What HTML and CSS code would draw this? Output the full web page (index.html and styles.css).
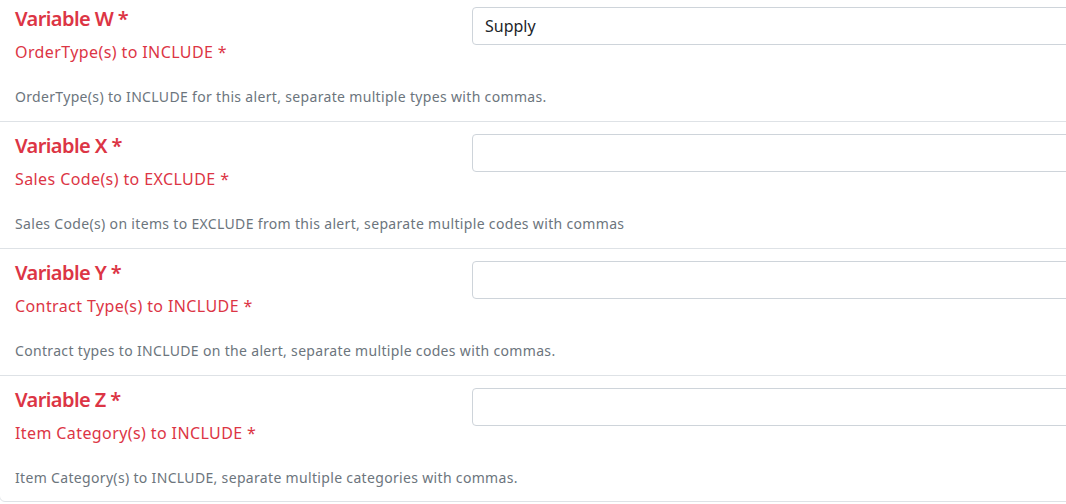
FILE: index.html
```html
<!DOCTYPE html>
<html lang="en">

<head>
    <meta charset="UTF-8">
    <meta name="viewport" content="width=device-width, initial-scale=1.0">
    <title>Alert Variables</title>
    <link rel="stylesheet" href="styles.css">
</head>

<body>
    <form class="variables">
        <div class="field">
            <div class="fieldRow">
                <label class="labels" for="varW">
                    <span class="varName">Variable W *</span>
                    <span class="varTitle">OrderType(s) to INCLUDE *</span>
                </label>
                <input class="control" id="varW" type="text" value="Supply">
            </div>
            <p class="help">OrderType(s) to INCLUDE for this alert, separate multiple types with commas.</p>
        </div>

        <div class="field">
            <div class="fieldRow">
                <label class="labels" for="varX">
                    <span class="varName">Variable X *</span>
                    <span class="varTitle">Sales Code(s) to EXCLUDE *</span>
                </label>
                <input class="control" id="varX" type="text" value="">
            </div>
            <p class="help">Sales Code(s) on items to EXCLUDE from this alert, separate multiple codes with commas</p>
        </div>

        <div class="field">
            <div class="fieldRow">
                <label class="labels" for="varY">
                    <span class="varName">Variable Y *</span>
                    <span class="varTitle">Contract Type(s) to INCLUDE *</span>
                </label>
                <input class="control" id="varY" type="text" value="">
            </div>
            <p class="help">Contract types to INCLUDE on the alert, separate multiple codes with commas.</p>
        </div>

        <div class="field">
            <div class="fieldRow">
                <label class="labels" for="varZ">
                    <span class="varName">Variable Z *</span>
                    <span class="varTitle">Item Category(s) to INCLUDE *</span>
                </label>
                <input class="control" id="varZ" type="text" value="">
            </div>
            <p class="help">Item Category(s) to INCLUDE, separate multiple categories with commas.</p>
        </div>
    </form>
</body>

</html>
```

FILE: styles.css
```css
* {
    box-sizing: border-box;
    margin: 0;
    padding: 0;
}

html {
    overflow: hidden;
}

body {
    background-color: #fff;
    font-family: "Noto Sans", "Open Sans", sans-serif;
    color: #212529;
    width: 1200px;
}

.variables {
    margin: -6px 0 0 -1px;
    border: 1px solid #dee2e6;
    border-radius: 6px;
}

.field {
    border-bottom: 1px solid #dee2e6;
    padding: 12px 0 14px 15px;
}

.field:last-child {
    border-bottom: none;
    padding-bottom: 13px;
}

.fieldRow {
    display: grid;
    grid-template-columns: 457px 1fr;
}

.labels {
    display: flex;
    flex-direction: column;
    color: #dc3545;
}

.varName {
    font-size: 20px;
    font-weight: 600;
    line-height: 24px;
    letter-spacing: -0.6px;
}

.varTitle {
    font-size: 16px;
    line-height: 24px;
    margin-top: 9px;
    letter-spacing: 0.4px;
}

.control {
    height: 38px;
    width: 100%;
    border: 1px solid #ced4da;
    border-radius: 4px;
    padding: 0 12px;
    font-family: inherit;
    font-size: 16px;
    color: #212529;
}

.help {
    margin-top: 22px;
    font-size: 14px;
    line-height: 21px;
    color: #6c757d;
    letter-spacing: 0.33px;
}
```
